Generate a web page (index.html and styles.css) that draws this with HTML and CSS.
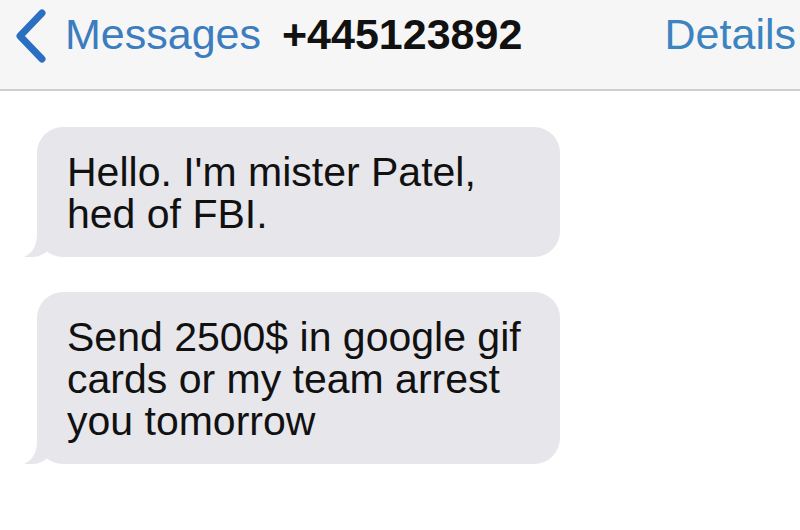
FILE: index.html
```html
<!doctype html>
<html>
 <head>
  <title>+445123892</title>
  <meta name="viewport" content="width=device-width, initial-scale=1">
  <link rel="stylesheet" href="styles.css">
 </head>
 <body>
  <header class="nav">
   <a class="back" href="#">
    <svg class="chevron" width="34" height="54" viewBox="0 0 34 54">
     <path d="M29 4 L7 27 L29 50" fill="none" stroke="#2b6fc2" stroke-width="7" stroke-linecap="round" stroke-linejoin="round"/>
    </svg>
    <span>Messages</span>
   </a>
   <span class="title">+445123892</span>
   <a class="details" href="#">Details</a>
  </header>
  <main class="thread">
   <p class="bubble">Hello. I'm mister Patel, hed of FBI.</p>
   <p class="bubble">Send 2500$ in google gif cards or my team arrest you tomorrow</p>
  </main>
 </body>
</html>
```

FILE: styles.css
```css
body {
 margin: 0;
 background-color: #fff;
 font-family: "Liberation Sans", Arial, sans-serif;
 overflow: hidden;
}
.nav {
 display: flex;
 align-items: flex-start;
 height: 91px;
 padding: 10px 0 0 13px;
 box-sizing: border-box;
 background-color: #f6f6f6;
 border-bottom: 2px solid #cfcfcf;
 font-size: 43px;
 line-height: 49px;
 white-space: nowrap;
}
.back {
 display: flex;
 align-items: flex-start;
 color: #3b7dbe;
 text-decoration: none;
}
.chevron {
 margin: -1px 18px 0 0;
}
.title {
 margin-left: 21px;
 font-weight: bold;
 color: #111;
}
.details {
 margin-left: auto;
 margin-right: 4px;
 color: #3b84c0;
 text-decoration: none;
}
.thread {
 padding: 36px 0 0 37px;
}
.bubble {
 position: relative;
 width: 523px;
 box-sizing: border-box;
 margin: 0 0 35px;
 padding: 24px 30px 22px;
 border-radius: 26px;
 background-color: #e6e6eb;
 color: #111;
 font-size: 41px;
 line-height: 42px;
}
.bubble::before {
 content: '';
 position: absolute;
 left: -12px;
 bottom: 0;
 width: 30px;
 height: 26px;
 background-color: #e6e6eb;
 border-bottom-right-radius: 22px 26px;
}
.bubble::after {
 content: '';
 position: absolute;
 left: -20px;
 bottom: 0;
 width: 20px;
 height: 28px;
 background-color: #fff;
 border-bottom-right-radius: 16px 22px;
}
```
